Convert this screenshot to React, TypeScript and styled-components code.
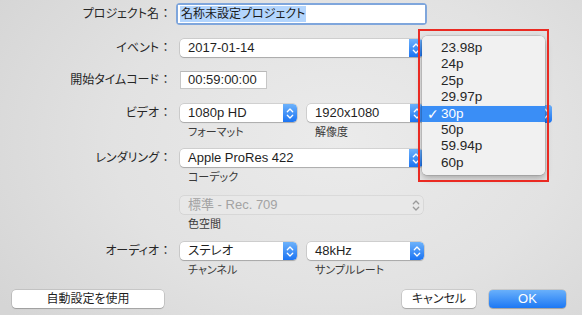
import React from "react";
import styled, { createGlobalStyle } from "styled-components";

const Global = createGlobalStyle`
  html, body { margin: 0; padding: 0; }
  body {
    width: 582px; height: 315px; overflow: hidden;
    font-family: "Liberation Sans", "Noto Sans CJK JP", sans-serif;
    font-feature-settings: "palt";
    -webkit-font-smoothing: antialiased;
  }
`;

const Window = styled.div`
  position: relative;
  width: 582px;
  height: 315px;
  box-sizing: border-box;
  padding-top: 3px;
  background: radial-gradient(ellipse 70% 90% at 58% 45%, #ebebeb 0%, #e2e2e2 55%, #d5d5d5 100%);
  color: #262626;
  overflow: hidden;
`;

const Row = styled.div<{ $mt: number }>`
  display: grid;
  grid-template-columns: 172px auto;
  column-gap: 8px;
  align-items: start;
  margin-top: ${(p) => p.$mt}px;
`;

const Label = styled.div<{ $h: number }>`
  height: ${(p) => p.$h}px;
  line-height: ${(p) => p.$h}px;
  text-align: right;
  font-size: 12px;
  color: #262626;
  white-space: nowrap;
`;

const Colon = styled.span`
  display: inline-block;
  width: 13px;
  text-align: center;
  font-feature-settings: normal;
`;

const Controls = styled.div`
  display: flex;
  gap: 10px;
`;

const Group = styled.div`
  display: flex;
  flex-direction: column;
`;

const SubLabel = styled.div`
  height: 20px;
  line-height: 20px;
  padding-left: 8px;
  font-size: 11px;
  color: #3a3a3a;
  white-space: nowrap;
`;

const FocusField = styled.div`
  width: 251px;
  height: 22px;
  box-sizing: border-box;
  margin-left: -4px;
  padding: 2px;
  border-radius: 4px;
  background: #7fa6dc;
`;

const FieldInner = styled.div`
  height: 100%;
  background: #fff;
  display: flex;
  align-items: center;
  padding-left: 2px;
`;

const Selected = styled.span`
  background: #b3d5fd;
  font-size: 12px;
  line-height: 16px;
  padding: 0 1px;
  color: #1a1a1a;
`;

const TextField = styled.div<{ $w: number }>`
  width: ${(p) => p.$w}px;
  height: 18px;
  box-sizing: border-box;
  background: #fff;
  border: 1px solid #c6c6c6;
  border-top-color: #b8b8b8;
  font-size: 13px;
  line-height: 16px;
  padding-left: 7px;
  color: #1f1f1f;
`;

const PopupBox = styled.div<{ $w: number; $disabled?: boolean }>`
  width: ${(p) => p.$w}px;
  height: 18px;
  box-sizing: border-box;
  display: flex;
  align-items: center;
  border-radius: 4px;
  background: ${(p) => (p.$disabled ? "#e8e8e8" : "#fff")};
  box-shadow: ${(p) =>
    p.$disabled
      ? "0 0 0 0.5px rgba(0,0,0,0.12)"
      : "0 0 0 0.5px rgba(0,0,0,0.2), 0 1px 1px rgba(0,0,0,0.18)"};
  overflow: hidden;
`;

const PopupText = styled.div<{ $disabled?: boolean; $size: number }>`
  flex: 1;
  padding-left: 8px;
  font-size: ${(p) => p.$size}px;
  line-height: 18px;
  white-space: nowrap;
  color: ${(p) => (p.$disabled ? "#a3a3a3" : "#1f1f1f")};
`;

const Stepper = styled.div<{ $disabled?: boolean }>`
  width: 14px;
  height: 18px;
  display: flex;
  align-items: center;
  justify-content: center;
  border-radius: 0 4px 4px 0;
  background: ${(p) =>
    p.$disabled ? "transparent" : "linear-gradient(#6db2fb, #1b74f3)"};
`;

const Arrows = ({ color }: { color: string }) => (
  <svg width="8" height="13" viewBox="0 0 8 13">
    <path d="M1.3 4.8 L4 2 L6.7 4.8" fill="none" stroke={color} strokeWidth="1.3" strokeLinecap="round" strokeLinejoin="round" />
    <path d="M1.3 8.2 L4 11 L6.7 8.2" fill="none" stroke={color} strokeWidth="1.3" strokeLinecap="round" strokeLinejoin="round" />
  </svg>
);

const Popup = ({ w, text, disabled, size = 13 }: { w: number; text: string; disabled?: boolean; size?: number }) => (
  <PopupBox $w={w} $disabled={disabled}>
    <PopupText $disabled={disabled} $size={size}>{text}</PopupText>
    <Stepper $disabled={disabled}>
      <Arrows color={disabled ? "#9a9a9a" : "#fff"} />
    </Stepper>
  </PopupBox>
);

const Footer = styled.div`
  display: flex;
  align-items: center;
  margin-top: 10px;
  padding: 0 16px 0 12px;
`;

const Button = styled.div<{ $w: number; $primary?: boolean }>`
  width: ${(p) => p.$w}px;
  height: 18px;
  border-radius: 4px;
  text-align: center;
  font-size: ${(p) => (p.$primary ? 13 : 12)}px;
  line-height: 18px;
  color: ${(p) => (p.$primary ? "#fff" : "#1f1f1f")};
  background: ${(p) => (p.$primary ? "linear-gradient(#69b0fb, #1d78f4)" : "#fff")};
  box-shadow: 0 0 0 0.5px rgba(0,0,0,0.2), 0 1px 1px rgba(0,0,0,0.18);
`;

const Spacer = styled.div`
  flex: 1;
`;

const ButtonGap = styled.div`
  width: 13px;
`;

/* overlay: frame-rate popup menu */
const UnderPopup = styled.div`
  position: absolute;
  left: 420px;
  top: 105px;
  width: 132px;
  height: 17px;
  border-radius: 4px;
  background: #3a8ef6;
  display: flex;
  justify-content: flex-end;
  align-items: center;
`;

const Menu = styled.div`
  position: absolute;
  left: 422px;
  top: 36px;
  width: 123px;
  height: 139px;
  box-sizing: border-box;
  padding-top: 4px;
  border-radius: 5px;
  background: rgba(241, 241, 241, 0.98);
  box-shadow: 0 0 0 0.5px rgba(0,0,0,0.18), 0 3px 7px rgba(0,0,0,0.28);
`;

const MenuItem = styled.div<{ $active?: boolean }>`
  position: relative;
  height: 16.4px;
  line-height: 16.4px;
  padding-left: 19px;
  font-size: 13.5px;
  color: ${(p) => (p.$active ? "#fff" : "#262626")};
  background: ${(p) => (p.$active ? "#3a8ef6" : "transparent")};
`;

const Check = styled.span`
  position: absolute;
  left: 5px;
  top: 0;
  font-size: 14px;
  font-weight: bold;
  font-family: "DejaVu Sans", sans-serif;
`;

const RedBox = styled.div`
  position: absolute;
  left: 418px;
  top: 29px;
  width: 131px;
  height: 153px;
  box-sizing: border-box;
  border: 2px solid #ea2a22;
  pointer-events: none;
`;

const rates = ["23.98p", "24p", "25p", "29.97p", "30p", "50p", "59.94p", "60p"];

const L = ({ text, h = 18 }: { text?: string; h?: number }) => (
  <Label $h={h}>
    {text}
    {text && <Colon>：</Colon>}
  </Label>
);

export default function App() {
  return (
    <>
      <Global />
      <Window>
        <Row $mt={0}>
          <L text="プロジェクト名" h={22} />
          <FocusField>
            <FieldInner>
              <Selected>名称未設定プロジェクト</Selected>
            </FieldInner>
          </FocusField>
        </Row>

        <Row $mt={14}>
          <L text="イベント" />
          <Popup w={243} text="2017-01-14" />
        </Row>

        <Row $mt={14}>
          <L text="開始タイムコード" />
          <TextField $w={87}>00:59:00:00</TextField>
        </Row>

        <Row $mt={15}>
          <L text="ビデオ" />
          <Controls>
            <Group>
              <Popup w={117} text="1080p HD" />
              <SubLabel>フォーマット</SubLabel>
            </Group>
            <Group>
              <Popup w={117} text="1920x1080" />
              <SubLabel>解像度</SubLabel>
            </Group>
          </Controls>
        </Row>

        <Row $mt={7}>
          <L text="レンダリング" />
          <Group>
            <Popup w={243} text="Apple ProRes 422" />
            <SubLabel>コーデック</SubLabel>
          </Group>
        </Row>

        <Row $mt={9}>
          <L />
          <Group>
            <Popup w={243} text="標準 - Rec. 709" disabled />
            <SubLabel>色空間</SubLabel>
          </Group>
        </Row>

        <Row $mt={8}>
          <L text="オーディオ" />
          <Controls>
            <Group>
              <Popup w={117} text="ステレオ" size={12.5} />
              <SubLabel>チャンネル</SubLabel>
            </Group>
            <Group>
              <Popup w={117} text="48kHz" />
              <SubLabel>サンプルレート</SubLabel>
            </Group>
          </Controls>
        </Row>

        <Footer>
          <Button $w={152}>自動設定を使用</Button>
          <Spacer />
          <Button $w={74}>キャンセル</Button>
          <ButtonGap />
          <Button $w={77} $primary>OK</Button>
        </Footer>

        <UnderPopup>
          <Stepper>
            <Arrows color="#fff" />
          </Stepper>
        </UnderPopup>
        <Menu>
          {rates.map((r) => (
            <MenuItem key={r} $active={r === "30p"}>
              {r === "30p" && <Check>✓</Check>}
              {r}
            </MenuItem>
          ))}
        </Menu>
        <RedBox />
      </Window>
    </>
  );
}
